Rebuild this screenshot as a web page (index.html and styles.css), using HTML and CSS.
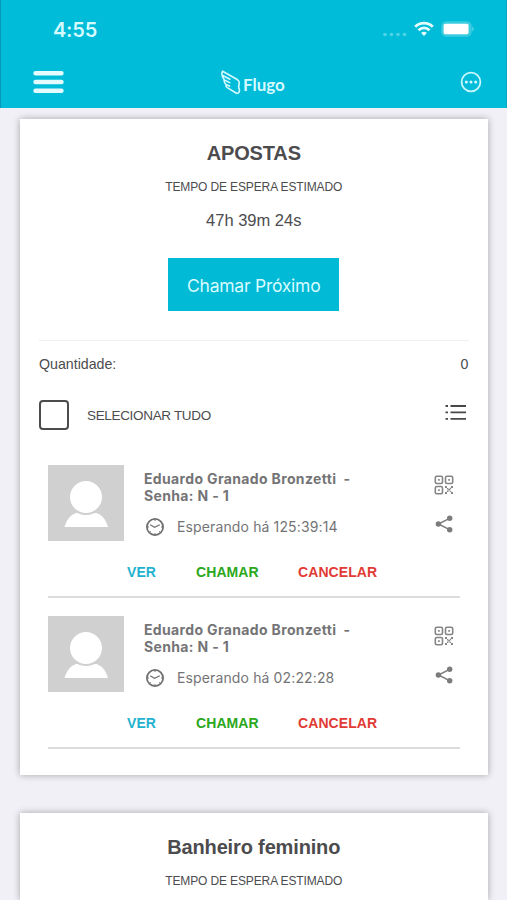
FILE: index.html
```html
<!DOCTYPE html>
<html lang="pt-BR">
<head>
    <meta charset="UTF-8">
    <meta name="viewport" content="width=device-width, initial-scale=1.0">
    <title>Flugo</title>
    <link rel="stylesheet" href="styles.css">
</head>
<body>
    <!-- shared icons -->
    <svg class="sprite" width="0" height="0">
        <symbol id="avatar" viewBox="0 0 76 76">
            <path d="M0 0H76V76H0z" fill="#d0d0d0"/>
            <path d="M16.5 62C18.5 55 22 50 28 48H48.5C54.5 50 58 55 60 62z" fill="#fff"/>
            <circle cx="38" cy="32" r="17" fill="#fff" stroke="#d0d0d0" stroke-width="2"/>
        </symbol>
        <symbol id="clock" viewBox="0 0 20 20">
            <g fill="none" stroke="#707072">
                <circle cx="10" cy="10" r="8.1" stroke-width="1.8"/>
                <path d="M5.2 7.7L9.5 10.2L14.8 7.7" stroke-width="1.2"/>
                <path d="M10 2.5V4M10 16V17.5M2.5 10H4M16 10H17.5M4.7 15.3L5.7 14.3M15.3 15.3L14.3 14.3" stroke-width="1"/>
            </g>
        </symbol>
        <symbol id="qr" viewBox="0 0 20 20">
            <g fill="none" stroke="#858585" stroke-width="1.6">
                <rect x="1.3" y="1.3" width="7.2" height="7.2" rx="1.5"/>
                <rect x="11.5" y="1.3" width="7.2" height="7.2" rx="1.5"/>
                <rect x="1.3" y="11.5" width="7.2" height="7.2" rx="1.5"/>
            </g>
            <path d="M4.1 4.1h1.7v1.7H4.1zM14.2 4.1h1.7v1.7h-1.7zM4.1 14.2h1.7v1.7H4.1zM11 11h2v2h-2zM13 13h1.4v1.4H13zM14.4 14h1.6v1.6h-1.6zM17 11h2v2h-2zM15.7 12.8h1.4v1.4h-1.4zM11 17h2v2h-2zM13 15.6h1.4V17H13zM17 17h2v2h-2zM15.7 15.7h1.4v1.4h-1.4z" fill="#858585"/>
        </symbol>
        <symbol id="share" viewBox="0 0 20 20">
            <path d="M16 4.1L4.5 10L16 15.9" fill="none" stroke="#7c7c7c" stroke-width="1.5"/>
            <g fill="#7c7c7c">
                <circle cx="15.7" cy="4.2" r="2.7"/>
                <circle cx="4.4" cy="10" r="2.7"/>
                <circle cx="15.7" cy="15.8" r="2.7"/>
            </g>
        </symbol>
    </svg>

    <header class="header">
        <div class="status">
            <span class="time">4:55</span>
            <div class="status-icons">
                <svg width="24" height="5" viewBox="0 0 24 5" fill="#4fd3e6">
                    <circle cx="2" cy="2.5" r="1.8"/>
                    <circle cx="8.5" cy="2.5" r="1.8"/>
                    <circle cx="15" cy="2.5" r="1.8"/>
                    <circle cx="21.5" cy="2.5" r="1.8"/>
                </svg>
                <svg class="wifi" width="20" height="16" viewBox="0 0 20 16" fill="none" stroke="#e6fdff" stroke-width="2.8">
                    <path d="M1.2 5.8C6.2 .9 13.8 .9 18.8 5.8"/>
                    <path d="M4.5 9.2C7.7 6.2 12.3 6.2 15.5 9.2"/>
                    <path d="M10 14.9L7.1 11.9C8.7 10.4 11.3 10.4 12.9 11.9z" fill="#e6fdff" stroke="none"/>
                </svg>
                <svg class="battery" width="33" height="16" viewBox="0 0 33 16">
                    <rect x="1" y="1" width="29" height="14" rx="4" fill="#3accdf" stroke="#3accdf" stroke-width="1.4"/>
                    <rect x="2.6" y="2.8" width="25" height="10.4" rx="1.8" fill="#fff"/>
                    <path d="M31.3 5.5C33.2 6.3 33.2 9.7 31.3 10.5z" fill="#5cd6e7"/>
                </svg>
            </div>
        </div>
        <div class="navbar">
            <svg width="31" height="24" viewBox="0 0 31 24" stroke="#e4fcff" stroke-width="4.6" stroke-linecap="round">
                <path d="M2.6 3.3H28.4M2.6 12H28.4M2.6 20.7H28.4"/>
            </svg>
            <div class="logo">
                <svg width="20" height="25" viewBox="0 0 20 25" fill="none" stroke="#d5faff" stroke-width="1.6" stroke-linejoin="round" stroke-linecap="round">
                    <path d="M1.6 1.2L15.8 9.2C18 10.5 18.5 11.6 18.2 13.5L17.7 16.3C17.4 18.2 18.8 19.1 18.4 21C18 23.2 16.4 23.9 14.6 22.8L6.3 17.6C4.8 16.6 4.7 15.6 5.4 14.8L8.5 16.1M5.4 14.8C3.4 13.2 2.8 11.6 3.3 10L8.7 12.6M3.3 10C1.2 7 .2 3.5 1.6 1.2M2.2 5.7L8.9 9.2"/>
                </svg>
                <span>Flugo</span>
            </div>
            <svg width="22" height="22" viewBox="0 0 22 22">
                <circle cx="11" cy="11" r="9.4" fill="none" stroke="#c8f7fc" stroke-width="1.8"/>
                <g fill="#d5faff">
                    <circle cx="6.3" cy="11" r="1.5"/>
                    <circle cx="11" cy="11" r="1.5"/>
                    <circle cx="15.7" cy="11" r="1.5"/>
                </g>
            </svg>
        </div>
    </header>

    <main class="content">
        <section class="card">
            <h2>APOSTAS</h2>
            <p class="wait-label">TEMPO DE ESPERA ESTIMADO</p>
            <p class="wait-time">47h 39m 24s</p>
            <button class="call-next">Chamar Próximo</button>
            <div class="amount">
                <span class="amount-label">Quantidade:</span>
                <span>0</span>
            </div>
            <div class="select-all">
                <span class="checkbox"></span>
                <span class="select-label">SELECIONAR TUDO</span>
                <svg class="list-icon" width="22" height="18" viewBox="0 0 22 18" stroke="#48484a" stroke-width="1.8">
                    <path d="M.5 3H3M5.5 3H21M.5 9.4H3M5.5 9.4H21M.5 15.8H3M5.5 15.8H21"/>
                </svg>
            </div>
            <ul class="queue">
                <li class="person">
                    <div class="person-main">
                        <svg class="avatar"><use href="#avatar"/></svg>
                        <div class="person-info">
                            <div class="name">Eduardo Granado Bronzetti&nbsp; -<br>Senha: N - 1</div>
                            <div class="waiting">
                                <svg class="icon"><use href="#clock"/></svg>
                                <span>Esperando há 125:39:14</span>
                            </div>
                        </div>
                        <div class="person-icons">
                            <svg class="icon"><use href="#qr"/></svg>
                            <svg class="icon"><use href="#share"/></svg>
                        </div>
                    </div>
                    <div class="actions">
                        <a class="view">VER</a>
                        <a class="call">CHAMAR</a>
                        <a class="cancel">CANCELAR</a>
                    </div>
                </li>
                <li class="person">
                    <div class="person-main">
                        <svg class="avatar"><use href="#avatar"/></svg>
                        <div class="person-info">
                            <div class="name">Eduardo Granado Bronzetti&nbsp; -<br>Senha: N - 1</div>
                            <div class="waiting">
                                <svg class="icon"><use href="#clock"/></svg>
                                <span>Esperando há 02:22:28</span>
                            </div>
                        </div>
                        <div class="person-icons">
                            <svg class="icon"><use href="#qr"/></svg>
                            <svg class="icon"><use href="#share"/></svg>
                        </div>
                    </div>
                    <div class="actions">
                        <a class="view">VER</a>
                        <a class="call">CHAMAR</a>
                        <a class="cancel">CANCELAR</a>
                    </div>
                </li>
            </ul>
        </section>

        <section class="card">
            <h2>Banheiro feminino</h2>
            <p class="wait-label">TEMPO DE ESPERA ESTIMADO</p>
        </section>
    </main>
</body>
</html>
```

FILE: styles.css
```css
* {
    box-sizing: border-box;
}
body {
    margin: 0;
    background-color: #f0f0f6;
    font-family: "Liberation Sans", Arial, sans-serif;
    color: #4c4c4e;
}
svg {
    display: block;
    flex-shrink: 0;
}
.sprite {
    position: absolute;
}
.header {
    height: 108px;
    background-color: #00bcd9;
    border-left: 1px solid #0898b8;
    border-right: 1px solid #0aa6c2;
}
.status {
    display: flex;
    justify-content: space-between;
    height: 60px;
    padding: 18px 32px 0 52px;
}
.time {
    font: 600 20px/24px Inter, sans-serif;
    letter-spacing: -0.2px;
    color: #d5faff;
}
.status-icons {
    display: flex;
    align-items: flex-start;
    padding-top: 3px;
}
.status-icons svg:first-child {
    margin-top: 11px;
}
.wifi {
    margin-left: 7px;
}
.battery {
    margin-left: 7px;
}
.navbar {
    display: flex;
    align-items: center;
    height: 44px;
    padding: 0 24px 0 32px;
}
.logo {
    display: flex;
    align-items: center;
    gap: 2px;
    margin: 0 auto 0 157px;
    color: #d5faff;
    font: 700 17px/20px Lato, sans-serif;
}
.logo span {
    padding-top: 5px;
}
.content {
    display: flex;
    flex-direction: column;
    gap: 38px;
    height: calc(100vh - 108px);
    overflow: hidden;
    padding: 11px 19.5px 0 20px;
}
.card {
    display: flex;
    flex-direction: column;
    height: 656px;
    flex-shrink: 0;
    padding: 22px 19px 0;
    background-color: #fff;
    box-shadow: 0 0 7px rgba(0, 0, 0, 0.32);
}
.card + .card {
    height: auto;
    flex: 1;
}
h2 {
    margin: 0;
    font-size: 20px;
    line-height: 24px;
    letter-spacing: -0.15px;
    text-align: center;
}
.wait-label {
    margin: 14px 0 0;
    font-size: 12px;
    line-height: 17px;
    letter-spacing: -0.13px;
    text-align: center;
}
.wait-time {
    margin: 14px 0 0;
    font-size: 16.5px;
    line-height: 20px;
    text-align: center;
}
.call-next {
    align-self: center;
    width: 171px;
    height: 53px;
    margin-top: 28px;
    padding: 2px 0 0;
    border: none;
    background-color: #00bad6;
    color: #d9fbff;
    font: 17.5px Inter, sans-serif;
    letter-spacing: -0.25px;
}
.amount {
    display: flex;
    justify-content: space-between;
    margin-top: 29px;
    padding-top: 14px;
    border-top: 1px solid #f0f0f0;
    font-size: 14.2px;
    line-height: 18px;
}
.select-all {
    display: flex;
    align-items: center;
    height: 30px;
    margin-top: 27px;
}
.checkbox {
    width: 30px;
    height: 30px;
    border: 2px solid #4c4c4e;
    border-radius: 4px;
}
.select-label {
    margin-left: 18px;
    font-size: 13.5px;
    letter-spacing: -0.33px;
}
.list-icon {
    margin: -7px 2px 0 auto;
}
.queue {
    list-style: none;
    margin: 35px 9px 0;
    padding: 0;
}
.person {
    height: 133px;
    margin-bottom: 18px;
    border-bottom: 2px solid #dcdcdc;
}
.person-main {
    display: flex;
    height: 76px;
    color: #747476;
    font-family: Inter, sans-serif;
}
.avatar {
    width: 76px;
    height: 76px;
}
.icon {
    width: 20px;
    height: 20px;
}
.person-info {
    flex: 1;
    padding: 6px 0 0 20px;
}
.name {
    font-size: 14px;
    font-weight: 700;
    line-height: 16.5px;
    letter-spacing: 0.35px;
}
.waiting {
    display: flex;
    align-items: center;
    gap: 12px;
    margin: 13px 0 0 1px;
    font-size: 14px;
    line-height: 20px;
    letter-spacing: 0.13px;
}
.person-icons {
    display: flex;
    flex-direction: column;
    gap: 19px;
    padding: 10px 6px 0 0;
}
.actions {
    display: flex;
    padding: 22px 0 0 79px;
    font-size: 14px;
    font-weight: 700;
    line-height: 18px;
    letter-spacing: 0.08px;
}
.view {
    width: 69px;
    color: #1fb2cf;
}
.call {
    width: 102px;
    color: #2ba71c;
}
.cancel {
    color: #e23a34;
}
```
